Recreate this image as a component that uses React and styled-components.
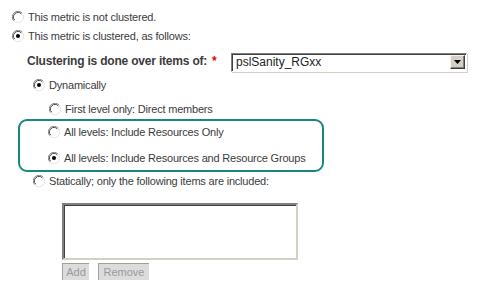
import React from "react";
import styled, { createGlobalStyle } from "styled-components";

const Global = createGlobalStyle`
  html, body {
    margin: 0;
    padding: 0;
    background: #fff;
  }
  body {
    font-family: "Liberation Sans", Arial, sans-serif;
    font-size: 11px;
    letter-spacing: -0.2px;
    color: #3c3c3c;
  }
`;

const Page = styled.div`
  width: 485px;
  height: 293px;
  box-sizing: border-box;
  padding: 7px 0 0 12px;
  display: flex;
  flex-direction: column;
`;

const Row = styled.label`
  display: flex;
  align-items: center;
  gap: 4px;
  height: 20px;
  margin-top: ${(p) => p.$top || 0}px;
  margin-left: ${(p) => p.$indent || 0}px;
  white-space: nowrap;
`;

const FieldRow = styled.div`
  display: flex;
  align-items: center;
  height: 20px;
  margin-top: 5px;
  margin-left: 15px;
`;

const FieldLabel = styled.span`
  font-weight: bold;
  font-size: 12px;
  color: #3c3c3c;
  width: 204px;
`;

const Required = styled.span`
  color: #e00000;
  margin-left: 5px;
`;

const Select = styled.div`
  width: 236px;
  height: 19px;
  margin-top: 2px;
  box-sizing: border-box;
  border-style: solid;
  border-width: 1px;
  border-color: #808080 #fff #fff #808080;
  box-shadow: inset 1px 1px 0 #404040, 1px 1px 0 #d4d0c8;
  display: flex;
  align-items: center;
  padding: 0 1px 0 4px;
  font-size: 12px;
  letter-spacing: 0;
  color: #222;
`;

const SelectText = styled.span`
  flex: 1;
`;

const ArrowButton = styled.span`
  width: 15px;
  height: 14px;
  box-sizing: border-box;
  background: #d4d0c8;
  border-style: solid;
  border-width: 1px;
  border-color: #f4f4f4 #404040 #404040 #f4f4f4;
  box-shadow: inset -1px -1px 0 #808080;
  display: flex;
  align-items: center;
  justify-content: center;
`;

const Highlight = styled.div`
  margin: 0 0 0 6px;
  width: 306px;
  height: 53px;
  box-sizing: border-box;
  padding-top: 1px;
  border: 2px solid #17877f;
  border-radius: 9px;
  display: flex;
  flex-direction: column;
  gap: 6px;
`;

const ItemsBox = styled.div`
  margin: 12px 0 0 50px;
  width: 236px;
  height: 57px;
  box-sizing: border-box;
  border-style: solid;
  border-width: 2px;
  border-color: #808080 #d4d0c8 #d4d0c8 #808080;
  box-shadow: inset 1px 1px 0 #404040;
  background: #fff;
`;

const Buttons = styled.div`
  display: flex;
  gap: 9px;
  margin: 3px 0 0 50px;
`;

const Button = styled.span`
  width: ${(p) => p.$w}px;
  height: 17px;
  box-sizing: border-box;
  background: #dcdcdc;
  border-left: 1px solid #a0a0a0;
  border-top: 1px solid #a0a0a0;
  color: #9a9a9a;
  display: flex;
  align-items: center;
  justify-content: center;
  font-size: 11px;
  letter-spacing: 0;
`;

function Radio({ checked }) {
  return (
    <svg width="12" height="12" viewBox="0 0 12 12">
      <path d="M10.2 2.2 A5.5 5.5 0 0 0 1.8 9.8" fill="none" stroke="#808080" strokeWidth="1" />
      <path d="M1.8 9.8 A5.5 5.5 0 0 0 10.2 2.2" fill="none" stroke="#e4e4e4" strokeWidth="1" />
      <path d="M9.3 2.9 A4.3 4.3 0 0 0 2.7 9.1" fill="none" stroke="#404040" strokeWidth="1" />
      <circle cx="6" cy="6" r="3.8" fill="#fff" />
      {checked && <circle cx="6" cy="6" r="2" fill="#000" />}
    </svg>
  );
}

function Option({ checked, children, ...rest }) {
  return (
    <Row {...rest}>
      <Radio checked={checked} />
      <span>{children}</span>
    </Row>
  );
}

export default function App() {
  return (
    <>
      <Global />
      <Page>
        <Option>This metric is not clustered.</Option>
        <Option checked $top={-1}>This metric is clustered, as follows:</Option>
        <FieldRow>
          <FieldLabel>
            Clustering is done over items of:<Required>*</Required>
          </FieldLabel>
          <Select>
            <SelectText>pslSanity_RGxx</SelectText>
            <ArrowButton>
              <svg width="7" height="4" viewBox="0 0 7 4">
                <path d="M0 0 H7 L3.5 4 Z" fill="#000" />
              </svg>
            </ArrowButton>
          </Select>
        </FieldRow>
        <Option checked $top={4} $indent={21}>Dynamically</Option>
        <Option $top={4} $indent={37}>First level only: Direct members</Option>
        <Highlight>
          <Option $indent={28}>All levels: Include Resources Only</Option>
          <Option checked $indent={28}>All levels: Include Resources and Resource Groups</Option>
        </Highlight>
        <Option $top={-1} $indent={21}>Statically; only the following items are included:</Option>
        <ItemsBox />
        <Buttons>
          <Button $w={27}>Add</Button>
          <Button $w={51}>Remove</Button>
        </Buttons>
      </Page>
    </>
  );
}
